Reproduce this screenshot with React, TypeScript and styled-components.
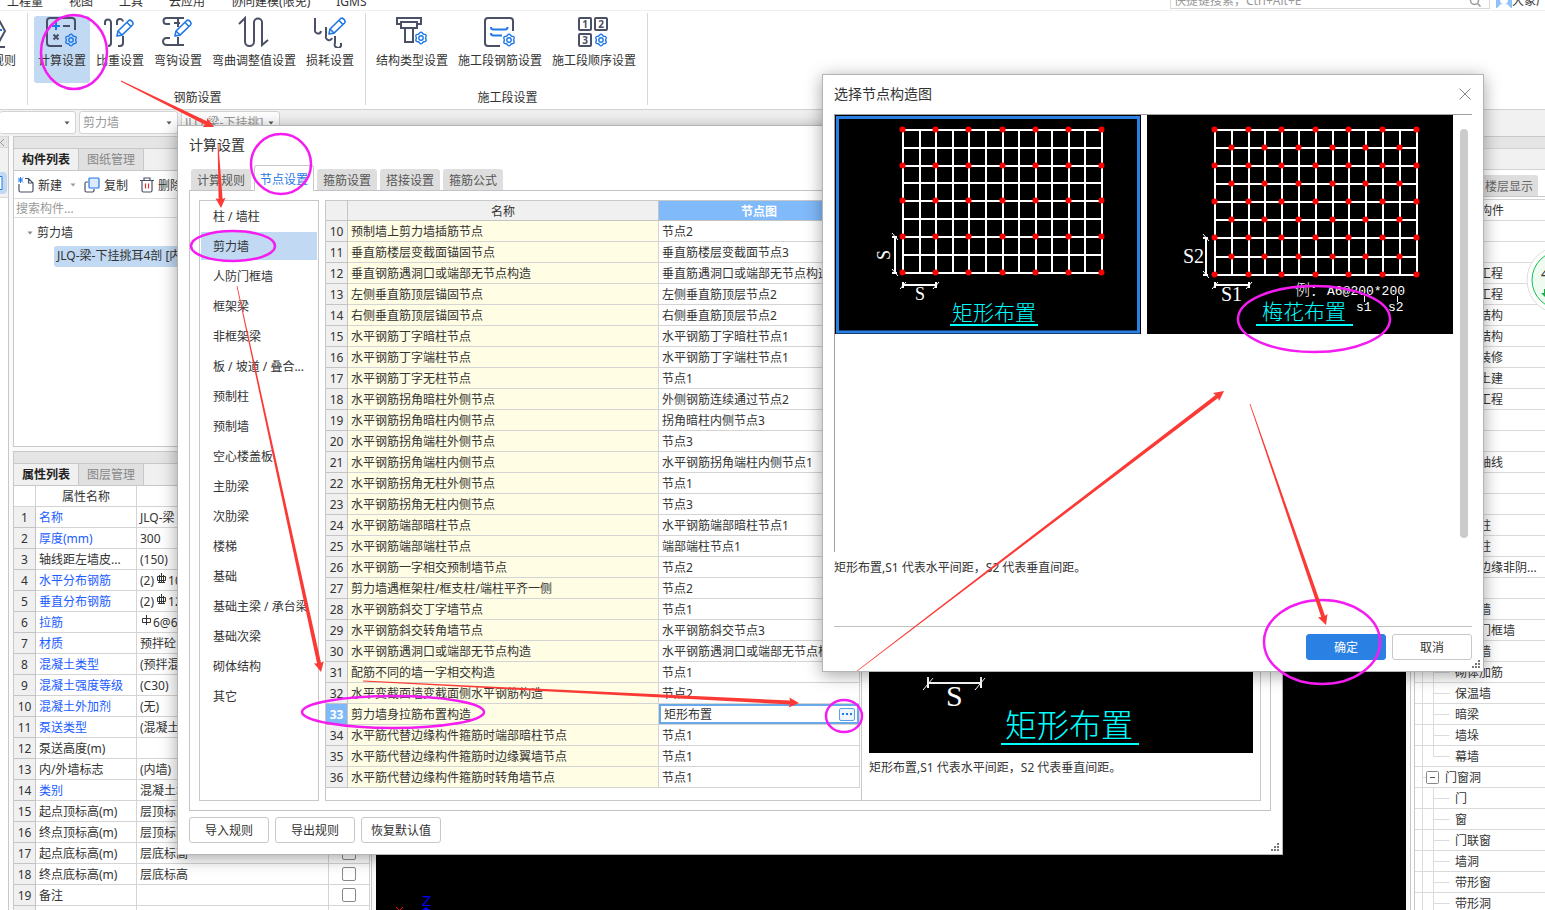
import React from 'react';
import styled, { createGlobalStyle, css } from 'styled-components';

const Global = createGlobalStyle`
  *, *::before, *::after { box-sizing: border-box; }
  html, body { margin: 0; padding: 0; }
  body, button, input, select, table {
    font-family: "Noto Sans", "Noto Sans CJK SC", sans-serif;
    font-size: 12px;
    color: #333;
  }
  body { line-height: 20px; background: #fafafa; }
  button { cursor: pointer; }
  svg { display: block; flex: none; }
`;

const INK = '#4a5166';
const BLUE = '#1f78e6';
const LINE = '#c8c8c8';

const Screen = styled.div`
  position: relative;
  display: flex;
  flex-direction: column;
  height: 100vh;
  overflow: hidden;
  white-space: nowrap;
`;

/* ---------- menu ---------- */

const MenuBar = styled.nav`
  display: flex;
  align-items: flex-end;
  gap: 26px;
  height: 11px;
  padding-left: 7px;
  overflow: hidden;
  flex: none;
  background: #fff;
  border-bottom: 1px solid #f0f0f0;
`;

const MenuLink = styled.a`
  color: #333;
  text-decoration: none;
  line-height: 16px;
`;

const MenuRight = styled.div`
  display: flex;
  align-items: flex-end;
  gap: 6px;
  margin-left: auto;
`;

const QuickSearch = styled.label`
  display: flex;
  align-items: center;
  width: 320px;
  height: 17px;
  margin-bottom: 1px;
  padding: 0 8px 0 3px;
  border: 1px solid #d9d9d9;
  input {
    flex: 1;
    min-width: 0;
    padding: 0;
    border: 0;
    outline: 0;
    background: none;
    line-height: 16px;
  }
  input::placeholder { color: #999; }
`;

const User = styled.div`
  display: flex;
  align-items: flex-end;
  width: 49px;
  overflow: hidden;
  line-height: 18px;
`;

/* ---------- ribbon ---------- */

const Ribbon = styled.div`
  display: flex;
  flex: none;
  height: 99px;
  padding-top: 2px;
  background: #fff;
  border-bottom: 1px solid #d2d2d2;
`;

const RibbonGroup = styled.section<{ $cut?: boolean }>`
  display: flex;
  flex-direction: column;
  height: 92px;
  padding: 3px 7px 0 6px;
  border-right: 1px solid #d9d9d9;
  ${p => p.$cut && css`
    width: 28px;
    padding: 3px 7px 0 0;
    overflow: hidden;
    align-items: flex-end;
  `}
`;

const RibbonRow = styled.div`
  display: flex;
  gap: 2px;
`;

const RibbonButton = styled.button<{ $active?: boolean }>`
  display: flex;
  flex-direction: column;
  align-items: center;
  gap: 3px;
  height: 67px;
  padding: 0 4px;
  border: 0;
  border-radius: 3px;
  line-height: 20px;
  white-space: nowrap;
  background: ${p => (p.$active ? '#c1d9f2' : 'none')};
`;

const RibbonTitle = styled.div`
  margin-top: 7px;
  padding-left: 3px;
  line-height: 16px;
  text-align: center;
`;

const FilterBar = styled.div`
  display: flex;
  align-items: center;
  gap: 3px;
  flex: none;
  height: 26px;
  padding-bottom: 1px;
  background: #f1f1f1;
`;

const PickBox = styled.label<{ $w: number; $open?: boolean }>`
  display: flex;
  align-items: center;
  width: ${p => p.$w}px;
  height: 23px;
  padding: 0 5px 0 3px;
  background: #fff;
  border: 1px solid #d4d4d4;
  border-left-width: ${p => (p.$open ? 0 : 1)}px;
  border-radius: 3px;
  select {
    flex: 1;
    min-width: 0;
    padding: 0;
    border: 0;
    outline: 0;
    appearance: none;
    background: none;
    color: #999;
  }
`;

/* ---------- workspace ---------- */

const Workspace = styled.main`
  display: flex;
  gap: 4px;
  flex: 1;
  min-height: 0;
`;

const LeftStrip = styled.div`
  display: flex;
  flex-direction: column;
  width: 9px;
  overflow: hidden;
  border-right: 1px solid ${LINE};
  background: #fff;
`;

const StripHead = styled.div`
  height: 12px;
  padding-top: 1px;
  background: #e5e5e5;
  border-top: 1px solid #d9d9d9;
  border-bottom: 1px solid #d9d9d9;
`;

const StripTools = styled.div`
  height: 50px;
  padding-top: 24px;
  background: #f1f1f1;
  border-bottom: 1px solid #d9d9d9;
`;

const StripMark = styled.div`
  width: 7px;
  height: 22px;
  padding-top: 4px;
  border-radius: 0 4px 4px 0;
  background: #c1d9f2;
`;

const LeftColumn = styled.div`
  display: flex;
  flex-direction: column;
  gap: 4px;
  width: 359px;
  flex: none;
`;

const Panel = styled.section`
  display: flex;
  flex-direction: column;
  border: 1px solid ${LINE};
  border-top: 0;
  background: #fff;
`;

const PanelHead = styled.div`
  height: 12px;
  flex: none;
  background: #e5e5e5;
  border-top: 1px solid ${LINE};
`;

const PanelTabs = styled.div`
  display: flex;
  flex: none;
  height: 23px;
  background: #f0f0f0;
  border-top: 1px solid ${LINE};
  border-bottom: 1px solid ${LINE};
`;

const PanelTab = styled.button<{ $active?: boolean }>`
  width: 65px;
  padding: 0;
  border: 0;
  border-right: 1px solid ${LINE};
  line-height: 20px;
  background: ${p => (p.$active ? '#f0f0f0' : '#e0e0e0')};
  color: ${p => (p.$active ? '#222' : '#888')};
  font-weight: ${p => (p.$active ? 700 : 400)};
`;

const PanelTools = styled.div`
  display: flex;
  align-items: center;
  gap: 4px;
  height: 28px;
  overflow: hidden;
  border-bottom: 1px solid #dcdcdc;
`;

const ToolButton = styled.button`
  display: flex;
  align-items: center;
  gap: 4px;
  padding: 0 4px;
  border: 0;
  background: none;
`;

const PartSearch = styled.input`
  height: 19px;
  padding: 0 2px;
  border: 0;
  border-bottom: 1px solid #dcdcdc;
  outline: 0;
  &::placeholder { color: #999; opacity: 1; }
`;

const PartTree = styled.div`
  min-height: 228px;
  padding: 5px 0 0 13px;
  overflow: hidden;
`;

const TreeHead = styled.div`
  display: flex;
  align-items: center;
  gap: 4px;
  height: 20px;
  margin-bottom: 3px;
`;

const TreeLeaf = styled.div`
  height: 21px;
  margin-left: 27px;
  padding-left: 3px;
  border-radius: 3px;
  background: #c1d9f2;
`;

const Grid = styled.table`
  border-collapse: separate;
  border-spacing: 0;
  table-layout: fixed;
  th, td {
    height: 21px;
    padding: 2px 3px 0;
    line-height: 18px;
    overflow: hidden;
    font-weight: 400;
    text-align: left;
    border-right: 1px solid #d4d4d4;
    border-bottom: 1px solid #d4d4d4;
  }
`;

const PropGrid = styled(Grid)`
  width: 356px;
  thead th { text-align: center; }
  tbody th {
    padding: 2px 0 0;
    text-align: center;
    background: #f0f0f0;
    border-color: #c4c4c4;
  }
`;

const PropName = styled.td<{ $blue?: boolean }>`
  color: ${p => (p.$blue ? '#1a5cff' : '#333')};
`;

const Cell = styled.div`
  display: flex;
  align-items: center;
  gap: 1px;
  height: 18px;
`;

const Tick = styled.input`
  display: block;
  appearance: none;
  width: 14px;
  height: 14px;
  margin: 0 auto 2px;
  border: 1px solid #888;
  border-radius: 2px;
  background: #fff;
`;

const Canvas = styled.div`
  display: flex;
  align-items: flex-end;
  flex: 1;
  min-width: 0;
  padding-left: 14px;
  background: #000;
`;

const RightColumn = styled.aside`
  display: flex;
  flex-direction: column;
  width: 135px;
  flex: none;
  overflow: hidden;
  padding-left: 3px;
  border-left: 1px solid ${LINE};
  background: #fff;
`;

const RightGap = styled.div`
  height: 22px;
  flex: none;
  background: #f1f1f1;
  border-top: 1px solid #d2d2d2;
  border-bottom: 1px solid #d2d2d2;
`;

const RightTabs = styled.div`
  display: flex;
  flex: none;
  align-items: flex-end;
  height: 27px;
  margin-bottom: 2px;
  padding-left: 65px;
  border-bottom: 1px solid ${LINE};
`;

const RightTab = styled.button`
  height: 21px;
  padding: 0 5px 0 6px;
  border: 0;
  border-radius: 3px 3px 0 0;
  background: #dedede;
  color: #666;
`;

const RightList = styled.div`
  border-left: 1px solid ${LINE};
  border-top: 1px solid #d4d4d4;
`;

const RightRow = styled.div<{ $kind: string }>`
  display: flex;
  align-items: center;
  height: 21px;
  border-bottom: 1px solid #dadada;
  padding-left: ${p => (p.$kind === 'deep' ? 64 : p.$kind === 'head' ? 65 : 7)}px;
`;

const RightText = styled.span`
  padding-top: 2px;
  line-height: 18px;
`;

/* ---------- windows ---------- */

const Window = styled.section<{ $x: number; $y: number; $w: number }>`
  position: absolute;
  left: ${p => p.$x}px;
  top: ${p => p.$y}px;
  width: ${p => p.$w}px;
  padding: 0 11px 11px;
  background: #fff;
  border: 1px solid #b4b4b4;
  box-shadow: 0 3px 16px rgba(0, 0, 0, 0.36);
`;

const WindowHead = styled.header`
  display: flex;
  align-items: center;
  justify-content: space-between;
  padding: 9px 1px 10px 0;
`;

const WindowTitle = styled.h2`
  margin: 0;
  font-size: 14px;
  font-weight: 400;
  line-height: 20px;
`;

const IconButton = styled.button`
  padding: 0;
  border: 0;
  background: none;
`;

const Grip = styled.svg`
  position: absolute;
  right: 2px;
  bottom: 2px;
`;

const TabBar = styled.div`
  display: flex;
  align-items: flex-end;
  gap: 3px;
  height: 25px;
  padding-left: 2px;
`;

const Tab = styled.button<{ $active?: boolean }>`
  height: 21px;
  padding: 0 6px;
  border: 0;
  border-radius: 3px 3px 0 0;
  background: #dedede;
  color: #555;
  ${p => p.$active && css`
    height: 26px;
    margin-bottom: -1px;
    padding: 0 5px;
    position: relative;
    border: 1px solid ${LINE};
    border-bottom: 0;
    background: #fff;
    color: ${BLUE};
  `}
`;

const Frame = styled.div`
  display: flex;
  gap: 6px;
  padding: 9px;
  border: 1px solid #c4c4c8;
`;

const Categories = styled.ul`
  display: flex;
  flex-direction: column;
  gap: 2px;
  width: 120px;
  flex: none;
  margin: 0;
  padding: 1px;
  list-style: none;
  border: 1px solid ${LINE};
`;

const Category = styled.li<{ $active?: boolean }>`
  height: 28px;
  padding-left: 12px;
  line-height: 30px;
  background: ${p => (p.$active ? '#c1d9f2' : 'none')};
`;

const NodeBox = styled.div`
  display: flex;
  flex: 1;
  min-width: 0;
  border: 1px solid ${LINE};
`;

const NodeTableArea = styled.div`
  flex: none;
  width: 536px;
  padding-bottom: 12px;
  border-right: 1px solid ${LINE};
`;

const NodeGrid = styled(Grid)`
  width: 534px;
  thead th {
    height: 20px;
    line-height: 17px;
    text-align: center;
    background: #f0f0f0;
    border-color: #c4c4c4;
  }
  thead th:last-child {
    background: #80bafa;
    color: #fff;
    font-weight: 700;
  }
`;

const RowNumber = styled.th<{ $active?: boolean }>`
  && {
    padding: 2px 0 0;
    text-align: center;
    border-color: #c4c4c4;
    background: ${p => (p.$active ? '#7fb9f9' : '#f0f0f0')};
    color: ${p => (p.$active ? '#fff' : '#333')};
    font-weight: ${p => (p.$active ? 700 : 400)};
  }
`;

const NodeName = styled.td`
  background: #fffde4;
`;

const NodeValue = styled.td<{ $editing?: boolean }>`
  && { ${p => p.$editing && 'padding: 0;'} }
`;

const Editor = styled.div`
  display: flex;
  align-items: center;
  height: 20px;
  padding: 0 2px 0 3px;
  border: 2px solid #6aa9e8;
  input {
    flex: 1;
    min-width: 0;
    height: 16px;
    padding: 0;
    border: 0;
    outline: 0;
  }
`;

const MoreButton = styled.button`
  display: flex;
  align-items: center;
  justify-content: center;
  width: 16px;
  height: 13px;
  padding: 0;
  border: 1px solid #5a9fe8;
  border-radius: 2px;
  background: #eef5fd;
`;

const Preview = styled.div`
  display: flex;
  flex-direction: column;
  gap: 5px;
  flex: 1;
  padding: 8px 7px 0;
`;

const Actions = styled.div<{ $end?: boolean }>`
  display: flex;
  gap: 6px;
  margin-top: ${p => (p.$end ? 0 : 6)}px;
  padding-top: ${p => (p.$end ? 7 : 0)}px;
  justify-content: ${p => (p.$end ? 'flex-end' : 'flex-start')};
  border-top: ${p => (p.$end ? '1px solid #c0c0c0' : '0')};
`;

const Button = styled.button<{ $primary?: boolean }>`
  width: 80px;
  height: 26px;
  padding: 0;
  border: 1px solid ${p => (p.$primary ? '#2b80e3' : '#c8c8c8')};
  border-radius: 3px;
  background: ${p => (p.$primary ? '#2b80e3' : '#fff')};
  color: ${p => (p.$primary ? '#fff' : '#333')};
`;

const Gallery = styled.div`
  display: flex;
  gap: 6px;
  height: 438px;
  border-top: 1px solid #a0a0a0;
  border-left: 1px solid #a0a0a0;
`;

const ScrollThumb = styled.div`
  width: 8px;
  height: 409px;
  margin: 14px 4px 0 auto;
  border-radius: 4px;
  background: #cbcbcb;
`;

const Note = styled.p`
  margin: 6px 0 48px;
`;

const Overlay = styled.svg`
  position: absolute;
  left: 0;
  top: 0;
  pointer-events: none;
`;

/* ---------- drawings ---------- */

const gearPoints = (cx: number, cy: number) =>
  Array.from({ length: 48 }, (_, i) => {
    const a = (i / 48) * Math.PI * 2;
    const r = 5.2 + 0.6 * Math.cos(6 * a);
    return `${(cx + r * Math.sin(a)).toFixed(2)},${(cy - r * Math.cos(a)).toFixed(2)}`;
  }).join(' ');

const Gear = ({ x, y }: { x: number; y: number }) => (
  <g fill="none" stroke={BLUE} strokeWidth="1.4">
    <polygon points={gearPoints(x, y)} />
    <circle cx={x} cy={y} r="2.2" />
  </g>
);

const Pencil = ({ x, y }: { x: number; y: number }) => (
  <g transform={`translate(${x} ${y})`} fill="#fff" stroke={BLUE} strokeWidth="1.6" strokeLinejoin="round">
    <path d="M0.5 16.5 1.5 11.5 12 1.2Q13.500 0 15 1.400L16 2.500Q17.200 4 16 5.500L5.500 15.600Z" />
    <path d="M10.500 3 14.500 7M1.500 11.500 5.500 15.500" />
  </g>
);

const Icon = ({ children }: { children: React.ReactNode }) => (
  <svg width="32" height="32" viewBox="0 0 32 32" fill="none" stroke={INK} strokeWidth="2">
    {children}
  </svg>
);

const CalcIcon = () => (
  <Icon>
    <path d="M29 14V5a3 3 0 0 0-3-3H4a3 3 0 0 0-3 3v22a3 3 0 0 0 3 3h12" />
    <path d="M10 6v8M6 10h8" stroke={BLUE} />
    <path d="M17 10h7M7.500 18.500l5 5M12.500 18.500l-5 5" />
    <Gear x={25} y={24} />
  </Icon>
);

const WeightIcon = () => (
  <Icon>
    <path d="M1 9V6.500a3 3 0 0 1 6 0V27a3 3 0 0 1-3 3M13 9V6.500a3 3 0 0 1 6-1M19 20v7a3 3 0 0 1-3 3h-2" />
    <Pencil x={12.500} y={3.500} />
  </Icon>
);

const HookIcon = () => (
  <Icon>
    <path d="M8 8H4.500a3 3 0 0 1 0-6H22M8 22H4.500a3.500 3.500 0 0 0 0 7H22M16 3v8M12 7h6M16 21v8" />
    <Pencil x={12.500} y={3.500} />
  </Icon>
);

const BendIcon = () => (
  <Icon>
    <path d="M1 8 7 2V25.500a4.500 4.500 0 0 0 9 0V6.500a4 4 0 0 1 8 0V29L30 24" />
  </Icon>
);

const LossIcon = () => (
  <Icon>
    <path d="M1 2v12a3 3 0 0 0 6 1M12 11v9a3 3 0 0 0 6 2M21 20v7a3 3 0 0 0 6 3v-3" />
    <Pencil x={14.500} y={1.500} />
  </Icon>
);

const StructureIcon = () => (
  <Icon>
    <path d="M5 8H1V2h24v6h-4M5 6h16v6H5zM9 12v14h8V12" />
    <Gear x={25} y={22} />
  </Icon>
);

const StageRebarIcon = () => (
  <Icon>
    <path d="M29 15V5a3 3 0 0 0-3-3H4a3 3 0 0 0-3 3v22a3 3 0 0 0 3 3h12" />
    <path d="M7 11q0 2.500 2.500 2.500H21q2.500 0 2.500-2.500M7 17q0 2.500 2.500 2.500H18" stroke={BLUE} />
    <Gear x={25} y={24} />
  </Icon>
);

const StageOrderIcon = () => (
  <Icon>
    <rect x="1" y="2" width="12" height="12" rx="1" />
    <rect x="17" y="2" width="12" height="12" rx="1" />
    <rect x="1" y="18" width="12" height="12" rx="1" />
    <g fill={INK} stroke="none" fontSize="10" fontWeight="700" textAnchor="middle">
      <text x="7" y="12">1</text>
      <text x="23" y="12">2</text>
      <text x="7" y="28">3</text>
    </g>
    <Gear x={23} y={24} />
  </Icon>
);

const Caret = ({ color = '#555' }: { color?: string }) => (
  <svg width="6" height="4" viewBox="0 0 6 4"><path d="M0.500 0.500h5L3 3.500z" fill={color} /></svg>
);

const RebarMark = ({ kind }: { kind: string }) => (
  <svg width="12" height="18" viewBox="0 0 12 18" fill="none" stroke="#333">
    <path d="M2.500 4.500h8v4h-8z" />
    <path d={kind === 'C' ? 'M6.500 1v10M4.500 3v7M8.500 3v7M3 10.500h7' : 'M6.500 1v10'} />
  </svg>
);

const GripDots = () => (
  <Grip width="9" height="9" viewBox="0 0 9 9" fill="#777">
    <path d="M6 0h2v2H6zM6 3h2v2H6zM3 3h2v2H3zM6 6h2v2H6zM3 6h2v2H3zM0 6h2v2H0z" />
  </Grip>
);

const CAD_CJK = '"Noto Sans CJK SC", sans-serif';
const CAD_LATIN = '"Liberation Serif", serif';

interface MeshProps { xs: number[]; ys: number[]; staggered?: boolean }

const Mesh = ({ xs, ys, staggered }: MeshProps) => {
  const right = xs[xs.length - 1];
  const bottom = ys[ys.length - 1];
  return (
    <>
      <g stroke="#fff" strokeWidth="2" shapeRendering="crispEdges">
        {xs.map(x => <line key={x} x1={x} x2={x} y1={ys[0]} y2={bottom} />)}
        {ys.map(y => <line key={y} x1={xs[0]} x2={right} y1={y} y2={y} />)}
      </g>
      <g fill="#f00">
        {ys.flatMap((y, j) =>
          xs.map((x, i) => {
            const shown = staggered ? (i + j) % 2 === 0 : i % 2 === 0 && j % 2 === 0;
            return shown ? <circle key={`${x}-${y}`} cx={x - 0.5} cy={y - 0.5} r="3" /> : null;
          }),
        )}
      </g>
    </>
  );
};

const RectLayout = () => (
  <svg width="306" height="219" viewBox="0 0 306 219">
    <rect width="306" height="219" fill="#000" />
    <path d="M2.500 1v216M1 2.500h304M303.500 1v217M1 217h304" stroke="#2b80e3" strokeWidth="3" fill="none" />
    <Mesh
      xs={[68, 85, 101, 118, 134, 151, 168, 184, 201, 217, 234, 250, 267]}
      ys={[15, 33, 51, 68, 86, 104, 122, 140, 158]}
    />
    <path d="M60 122v36M57 122h5M57 158h5M68 170h33M68 167v6M101 167v6" stroke="#fff" strokeWidth="2" />
    <path d="M57 118l6 7M57 154l6 7M65 174l6-7M98 174l6-7" stroke="#fff" />
    <g fill="#fff" fontFamily={CAD_LATIN} fontSize="18">
      <text x="80" y="185">S</text>
      <text transform="translate(55 145) rotate(-90)">S</text>
    </g>
    <text x="117" y="205" fill="#0ff" fontFamily={CAD_CJK} fontWeight="300" fontSize="21">矩形布置</text>
    <path d="M115 210h88" stroke="#0ff" strokeWidth="2" />
  </svg>
);

const PlumLayout = () => (
  <svg width="306" height="219" viewBox="0 0 306 219">
    <rect width="306" height="219" fill="#000" />
    <Mesh
      staggered
      xs={[68, 85, 102, 118, 135, 152, 169, 186, 202, 219, 236, 253, 270]}
      ys={[15, 33, 51, 69, 87, 105, 123, 142, 160]}
    />
    <path d="M59 123v37M56 123h5M56 160h5M68 170h34M68 167v6M102 167v6" stroke="#fff" strokeWidth="2" />
    <path d="M56 119l6 7M56 156l6 7M65 174l6-7M99 174l6-7M217.500 181v6M250.500 181v6" stroke="#fff" />
    <g fill="#fff" fontFamily={CAD_LATIN} fontSize="20">
      <text x="36" y="148">S2</text>
      <text x="74" y="186">S1</text>
    </g>
    <g fill="#fff" fontFamily={`"Liberation Mono", ${CAD_CJK}`} fontWeight="300">
      <text x="148" y="180" fontSize="15">例：</text>
      <text x="180" y="180" fontSize="13">A6@200*200</text>
      <text x="209" y="196" fontSize="13">s1</text>
      <text x="241" y="196" fontSize="13">s2</text>
    </g>
    <text x="115" y="204" fill="#0ff" fontFamily={CAD_CJK} fontWeight="300" fontSize="21">梅花布置</text>
    <path d="M109 210h97" stroke="#0ff" strokeWidth="2" />
  </svg>
);

const LargePreview = () => (
  <svg width="384" height="544" viewBox="0 0 384 544">
    <rect width="384" height="544" fill="#000" />
    <path d="M59 474h53M59 468v11M112 468v11" stroke="#fff" strokeWidth="2" />
    <path d="M54 481l10-12M106 481l10-12" stroke="#fff" />
    <text x="77" y="497" fill="#fff" fontFamily={CAD_LATIN} fontSize="30">S</text>
    <text x="136" y="528" fill="#0ff" fontFamily={CAD_CJK} fontWeight="300" fontSize="32">矩形布置</text>
    <path d="M132 535h138" stroke="#0ff" strokeWidth="2" />
  </svg>
);

/* ---------- data ---------- */

const menus = ['工程量', '视图', '工具', '云应用', '协同建模(限免)', 'IGMS'];

const props: { name: string; value?: string; blue?: boolean; mark?: string; after?: string }[] = [
  { name: '名称', value: 'JLQ-梁', blue: true },
  { name: '厚度(mm)', value: '300', blue: true },
  { name: '轴线距左墙皮...', value: '(150)' },
  { name: '水平分布钢筋', value: '(2)', mark: 'C', after: '10', blue: true },
  { name: '垂直分布钢筋', value: '(2)', mark: 'C', after: '12', blue: true },
  { name: '拉筋', mark: 'A', after: '6@6', blue: true },
  { name: '材质', value: '预拌砼', blue: true },
  { name: '混凝土类型', value: '(预拌混', blue: true },
  { name: '混凝土强度等级', value: '(C30)', blue: true },
  { name: '混凝土外加剂', value: '(无)', blue: true },
  { name: '泵送类型', value: '(混凝土', blue: true },
  { name: '泵送高度(m)' },
  { name: '内/外墙标志', value: '(内墙)' },
  { name: '类别', value: '混凝土墙', blue: true },
  { name: '起点顶标高(m)', value: '层顶标高' },
  { name: '终点顶标高(m)', value: '层顶标高' },
  { name: '起点底标高(m)', value: '层底标高' },
  { name: '终点底标高(m)', value: '层底标高' },
  { name: '备注' },
];

const categories = [
  '柱 / 墙柱', '剪力墙', '人防门框墙', '框架梁', '非框架梁', '板 / 坡道 / 叠合...', '预制柱', '预制墙',
  '空心楼盖板', '主肋梁', '次肋梁', '楼梯', '基础', '基础主梁 / 承台梁', '基础次梁', '砌体结构', '其它',
];

const nodes: [string, string][] = [
  ['预制墙上剪力墙插筋节点', '节点2'],
  ['垂直筋楼层变截面锚固节点', '垂直筋楼层变截面节点3'],
  ['垂直钢筋遇洞口或端部无节点构造', '垂直筋遇洞口或端部无节点构造2'],
  ['左侧垂直筋顶层锚固节点', '左侧垂直筋顶层节点2'],
  ['右侧垂直筋顶层锚固节点', '右侧垂直筋顶层节点2'],
  ['水平钢筋丁字暗柱节点', '水平钢筋丁字暗柱节点1'],
  ['水平钢筋丁字端柱节点', '水平钢筋丁字端柱节点1'],
  ['水平钢筋丁字无柱节点', '节点1'],
  ['水平钢筋拐角暗柱外侧节点', '外侧钢筋连续通过节点2'],
  ['水平钢筋拐角暗柱内侧节点', '拐角暗柱内侧节点3'],
  ['水平钢筋拐角端柱外侧节点', '节点3'],
  ['水平钢筋拐角端柱内侧节点', '水平钢筋拐角端柱内侧节点1'],
  ['水平钢筋拐角无柱外侧节点', '节点1'],
  ['水平钢筋拐角无柱内侧节点', '节点3'],
  ['水平钢筋端部暗柱节点', '水平钢筋端部暗柱节点1'],
  ['水平钢筋端部端柱节点', '端部端柱节点1'],
  ['水平钢筋一字相交预制墙节点', '节点2'],
  ['剪力墙遇框架柱/框支柱/端柱平齐一侧', '节点2'],
  ['水平钢筋斜交丁字墙节点', '节点1'],
  ['水平钢筋斜交转角墙节点', '水平钢筋斜交节点3'],
  ['水平钢筋遇洞口或端部无节点构造', '水平钢筋遇洞口或端部无节点构造2'],
  ['配筋不同的墙一字相交构造', '节点1'],
  ['水平变截面墙变截面侧水平钢筋构造', '节点2'],
  ['剪力墙身拉筋布置构造', '矩形布置'],
  ['水平筋代替边缘构件箍筋时端部暗柱节点', '节点1'],
  ['水平筋代替边缘构件箍筋时边缘翼墙节点', '节点1'],
  ['水平筋代替边缘构件箍筋时转角墙节点', '节点1'],
];

const rightRows: [string, string][] = [
  ['head', '构件'], ['deep', ''], ['deep', ''], ['deep', '工程'], ['deep', '工程'], ['deep', '结构'],
  ['deep', '结构'], ['deep', '装修'], ['deep', '土建'], ['deep', '工程'], ['deep', ''], ['deep', ''],
  ['deep', '轴线'], ['deep', ''], ['deep', ''], ['deep', '柱'], ['deep', '柱'], ['deep', '边缘非阴...'],
  ['deep', ''], ['deep', '墙'], ['deep', '门框墙'], ['deep', '墙'], ['leaf', '砌体加筋'], ['leaf', '保温墙'],
  ['leaf', '暗梁'], ['leaf', '墙垛'], ['last', '幕墙'], ['group', '门窗洞'], ['leaf', '门'], ['leaf', '窗'],
  ['leaf', '门联窗'], ['leaf', '墙洞'], ['leaf', '带形窗'], ['leaf', '带形洞'],
];

const BranchMark = ({ kind }: { kind: string }) => (
  <svg width={kind === 'group' ? 23 : 33} height="21" viewBox={`0 0 ${kind === 'group' ? 23 : 33} 21`} fill="none" stroke="#dcdcdc">
    <path d="M0.500 0v21" />
    {kind === 'leaf' && <path d="M11.500 0v21M11.500 10.500h16" />}
    {kind === 'last' && <path d="M11.500 0v10.500h16" />}
    {kind === 'group' && (
      <>
        <path d="M0 10.500h4" />
        <rect x="4.500" y="4.500" width="12" height="12" rx="1" stroke="#888" fill="#fff" />
        <path d="M8 10.500h5" stroke="#555" />
      </>
    )}
  </svg>
);

/* Tapered arrow: a hairline at the tail, widening to the head. */
const arrow = (x1: number, y1: number, x2: number, y2: number) => {
  const len = Math.hypot(x2 - x1, y2 - y1);
  const ux = (x2 - x1) / len;
  const uy = (y2 - y1) / len;
  const at = (back: number, side: number) =>
    `${(x2 - ux * back - uy * side).toFixed(1)},${(y2 - uy * back + ux * side).toFixed(1)}`;
  return [at(len, 0.4), at(9, 2), at(10, 5), at(0, 0), at(10, -5), at(9, -2), at(len, -0.4)].join(' ');
};

const rings = [
  [74, 52, 33, 37], [281, 164, 30, 30], [233, 246, 42, 15], [393, 712, 91, 16],
  [844, 716, 18, 16], [1314, 319, 76, 33], [1322, 642, 58, 42],
];

const arrows: [number, number, number, number][] = [
  [121, 81, 214, 127], [218, 144, 221, 208], [237, 286, 321, 672],
  [363, 681, 799, 703], [857, 671, 1224, 391], [1250, 404, 1326, 625],
];

export default function App() {
  return (
    <Screen>
      <Global />
      <MenuBar>
        {menus.map(m => <MenuLink key={m} href="#">{m}</MenuLink>)}
        <MenuRight>
          <QuickSearch>
            <input placeholder="快捷键搜索，Ctrl+Alt+E" />
            <svg width="12" height="12" viewBox="0 0 12 12" fill="none" stroke="#999" strokeWidth="1.5">
              <circle cx="5.500" cy="5.500" r="4" /><path d="M8.500 8.500l3 3" />
            </svg>
          </QuickSearch>
          <User>
            <svg width="16" height="18" viewBox="0 0 16 18">
              <rect width="16" height="16" fill="#8fc0fa" />
              <circle cx="8" cy="8" r="4" fill="#fff" /><path d="M1 16l4-4h6l4 4z" fill="#fff" />
            </svg>
            大象厂
          </User>
        </MenuRight>
      </MenuBar>

      <Ribbon>
        <RibbonGroup $cut>
          <RibbonButton>
            <svg width="24" height="32" viewBox="0 0 24 32" fill="none" stroke={INK} strokeWidth="2">
              <path d="M4 4h3l6 11-6 11H4M6 31h7" /><path d="M4 14h6" stroke={BLUE} />
            </svg>
            规则
          </RibbonButton>
        </RibbonGroup>
        <RibbonGroup>
          <RibbonRow>
            <RibbonButton $active><CalcIcon />计算设置</RibbonButton>
            <RibbonButton><WeightIcon />比重设置</RibbonButton>
            <RibbonButton><HookIcon />弯钩设置</RibbonButton>
            <RibbonButton><BendIcon />弯曲调整值设置</RibbonButton>
            <RibbonButton><LossIcon />损耗设置</RibbonButton>
          </RibbonRow>
          <RibbonTitle>钢筋设置</RibbonTitle>
        </RibbonGroup>
        <RibbonGroup>
          <RibbonRow>
            <RibbonButton><StructureIcon />结构类型设置</RibbonButton>
            <RibbonButton><StageRebarIcon />施工段钢筋设置</RibbonButton>
            <RibbonButton><StageOrderIcon />施工段顺序设置</RibbonButton>
          </RibbonRow>
          <RibbonTitle>施工段设置</RibbonTitle>
        </RibbonGroup>
      </Ribbon>

      <FilterBar>
        <PickBox $w={76} $open><select aria-label="楼层"><option /></select><Caret /></PickBox>
        <PickBox $w={99}><select aria-label="类型"><option>剪力墙</option></select><Caret /></PickBox>
        <PickBox $w={99}><select aria-label="构件"><option>JLQ-梁-下挂挑]</option></select><Caret /></PickBox>
      </FilterBar>

      <Workspace>
        <LeftStrip>
          <StripHead>
            <svg width="8" height="8" viewBox="0 0 8 8" stroke="#999" fill="none"><path d="M-3 1l7 7M4 1l-7 7" /></svg>
          </StripHead>
          <StripTools>
            <StripMark>
              <svg width="6" height="14" viewBox="0 0 6 14" stroke={BLUE} fill="#fff"><path d="M-1 0.500h3v13h-3" /></svg>
            </StripMark>
          </StripTools>
        </LeftStrip>

        <LeftColumn>
          <Panel>
            <PanelHead />
            <PanelTabs>
              <PanelTab $active>构件列表</PanelTab>
              <PanelTab>图纸管理</PanelTab>
            </PanelTabs>
            <PanelTools>
              <ToolButton>
                <svg width="16" height="16" viewBox="0 0 16 16" fill="none" stroke={INK} strokeWidth="1.2">
                  <path d="M1 7v6.500a1.500 1.500 0 0 0 1.500 1.500h11a1.500 1.500 0 0 0 1.500-1.500V6l-4.500-4.500H7M10.500 1.500V6H15" />
                  <path d="M0 0.500l5 5M5 0.500l-5 5M2.500 0v6M0 3h5" stroke={BLUE} strokeWidth="1" />
                </svg>
                新建
              </ToolButton>
              <Caret color="#999" />
              <ToolButton>
                <svg width="16" height="16" viewBox="0 0 16 16" fill="none" strokeWidth="1.2">
                  <path d="M4 5H2.500A1.500 1.500 0 0 0 1 6.500v7A1.500 1.500 0 0 0 2.500 15h6a1.500 1.500 0 0 0 1.500-1.500V12" stroke={INK} />
                  <rect x="5" y="1" width="10" height="10" rx="1" fill="#dceafc" stroke={BLUE} />
                </svg>
                复制
              </ToolButton>
              <ToolButton>
                <svg width="14" height="16" viewBox="0 0 14 16" fill="none" stroke={INK} strokeWidth="1.2">
                  <path d="M0 3.500h14M4 3V1h6v2M2 4v9.500A1.500 1.500 0 0 0 3.500 15h7a1.500 1.500 0 0 0 1.500-1.500V4" />
                  <path d="M5.500 6.500v5M8.500 6.500v5" stroke="#e03030" />
                </svg>
                删除
              </ToolButton>
            </PanelTools>
            <PartSearch aria-label="搜索构件" placeholder="搜索构件..." />
            <PartTree>
              <TreeHead><Caret color="#888" /><span>剪力墙</span></TreeHead>
              <TreeLeaf>JLQ-梁-下挂挑耳4剖 [内墙]</TreeLeaf>
            </PartTree>
          </Panel>
          <Panel>
            <PanelHead />
            <PanelTabs>
              <PanelTab $active>属性列表</PanelTab>
              <PanelTab>图层管理</PanelTab>
            </PanelTabs>
            <PropGrid>
              <colgroup><col width="22" /><col width="101" /><col width="192" /><col width="41" /></colgroup>
              <thead><tr><th /><th>属性名称</th><th /><th /></tr></thead>
              <tbody>
                {props.map((p, i) => (
                  <tr key={p.name}>
                    <th scope="row">{i + 1}</th>
                    <PropName id={`prop-${i}`} $blue={p.blue}>{p.name}</PropName>
                    <td><Cell>{p.value}{p.mark && <RebarMark kind={p.mark} />}{p.after}</Cell></td>
                    <td>{i > 15 && <Tick type="checkbox" aria-labelledby={`prop-${i}`} />}</td>
                  </tr>
                ))}
                <tr>
                  <th />
                  <td><svg width="12" height="12" viewBox="0 0 12 12" fill="none" stroke="#888"><rect x="0.500" y="0.500" width="11" height="11" rx="1" /><path d="M3 6h6M6 3v6" /></svg></td>
                  <td /><td />
                </tr>
              </tbody>
            </PropGrid>
          </Panel>
        </LeftColumn>

        <Canvas>
          <svg width="60" height="20" viewBox="0 0 60 20">
            <text x="32" y="16" fill="#00f" fontSize="15" fontFamily='"Liberation Sans", sans-serif'>Z</text>
            <path d="M32 20l4-3 4 3z" fill="#00f" />
            <path d="M6 17l3 3M13 17l-3 3" stroke="#f00" />
          </svg>
        </Canvas>

        <RightColumn>
          <PanelHead />
          <RightGap />
          <RightTabs><RightTab>楼层显示</RightTab></RightTabs>
          <RightList>
            {rightRows.map(([kind, text], i) => (
              <RightRow key={i} $kind={kind}>
                {kind !== 'deep' && kind !== 'head' && <BranchMark kind={kind} />}
                <RightText>{text}</RightText>
              </RightRow>
            ))}
          </RightList>
        </RightColumn>
      </Workspace>

      <Overlay width="1545" height="910" viewBox="0 0 1545 910">
        <circle cx="1561" cy="280" r="34" fill="#fff" stroke="#ddd" />
        <circle cx="1561" cy="280" r="29" fill="#effaf1" stroke="#12c24b" />
        <text x="1541" y="279" fill="#333" fontSize="14">4</text>
        <path d="M1541 293l5 5 5-5h-3v-4h-4v4z" fill="#12b040" />
      </Overlay>

      <Window $x={177} $y={125} $w={1106}>
        <WindowHead><WindowTitle>计算设置</WindowTitle></WindowHead>
        <TabBar>
          <Tab>计算规则</Tab>
          <Tab $active>节点设置</Tab>
          <Tab>箍筋设置</Tab>
          <Tab>搭接设置</Tab>
          <Tab>箍筋公式</Tab>
        </TabBar>
        <Frame>
          <Categories>
            {categories.map((c, i) => <Category key={c} $active={i === 1}>{c}</Category>)}
          </Categories>
          <NodeBox>
            <NodeTableArea>
              <NodeGrid>
                <colgroup><col width="22" /><col width="311" /><col width="201" /></colgroup>
                <thead><tr><th /><th>名称</th><th>节点图</th></tr></thead>
                <tbody>
                  {nodes.map(([name, value], i) => {
                    const editing = i === 23;
                    return (
                      <tr key={name}>
                        <RowNumber scope="row" $active={editing}>{i + 10}</RowNumber>
                        <NodeName id={`node-${i}`}>{name}</NodeName>
                        <NodeValue $editing={editing}>
                          {editing ? (
                            <Editor>
                              <input defaultValue={value} aria-labelledby={`node-${i}`} />
                              <MoreButton aria-labelledby={`node-${i}`}>
                                <svg width="10" height="2" viewBox="0 0 10 2" fill={BLUE}><path d="M0 0h2v2H0zM4 0h2v2H4zM8 0h2v2H8z" /></svg>
                              </MoreButton>
                            </Editor>
                          ) : value}
                        </NodeValue>
                      </tr>
                    );
                  })}
                </tbody>
              </NodeGrid>
            </NodeTableArea>
            <Preview>
              <LargePreview />
              <span>矩形布置,S1 代表水平间距，S2 代表垂直间距。</span>
            </Preview>
          </NodeBox>
        </Frame>
        <Actions>
          <Button>导入规则</Button>
          <Button>导出规则</Button>
          <Button>恢复默认值</Button>
        </Actions>
        <GripDots />
      </Window>

      <Window $x={822} $y={74} $w={662}>
        <WindowHead>
          <WindowTitle>选择节点构造图</WindowTitle>
          <IconButton aria-label="关闭">
            <svg width="12" height="12" viewBox="0 0 12 12" stroke="#888" fill="none"><path d="M0.500 0.500l11 11M11.500 0.500l-11 11" /></svg>
          </IconButton>
        </WindowHead>
        <Gallery>
          <RectLayout />
          <PlumLayout />
          <ScrollThumb />
        </Gallery>
        <Note>矩形布置,S1 代表水平间距，S2 代表垂直间距。</Note>
        <Actions $end>
          <Button $primary>确定</Button>
          <Button>取消</Button>
        </Actions>
        <GripDots />
      </Window>

      <Overlay width="1545" height="910" viewBox="0 0 1545 910">
        <g fill="none" stroke="#f41cf0" strokeWidth="2.5">
          {rings.map(([cx, cy, rx, ry]) => <ellipse key={cx} cx={cx} cy={cy} rx={rx} ry={ry} />)}
        </g>
        <g fill="#fb3a36">
          {arrows.map(a => <polygon key={a[0]} points={arrow(...a)} />)}
        </g>
      </Overlay>
    </Screen>
  );
}
